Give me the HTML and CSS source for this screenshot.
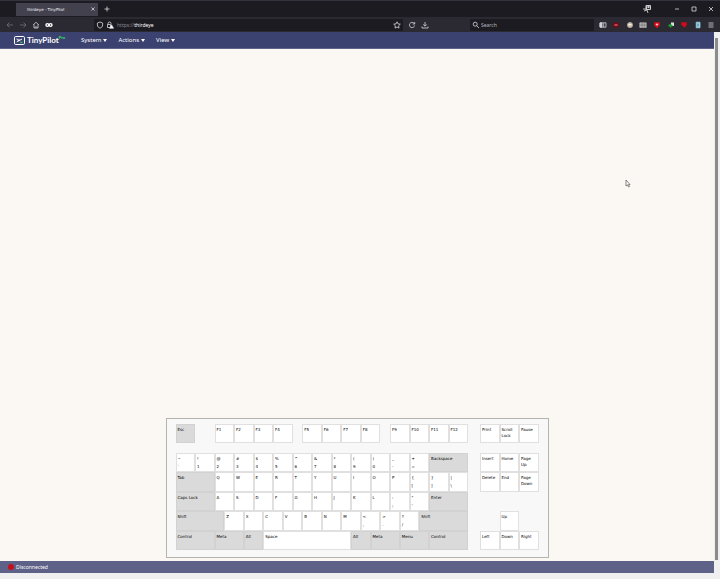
FILE: index.html
```
<!DOCTYPE html>
<html lang="en">
<head>
<meta charset="UTF-8">
<meta name="viewport" content="width=device-width, initial-scale=1.0">
<title>thirdeye - TinyPilot</title>
<link rel="stylesheet" href="styles.css">
</head>
<body>

<!-- Browser window -->
<div class="tab-strip">
  <div class="tab">
    <span>thirdeye - TinyPilot</span>
    <button class="tab-close" aria-label="Close tab"><svg viewBox="0 0 8 8"><path d="M2.500 2.500l3 3M5.500 2.500l-3 3"/></svg></button>
  </div>
  <button class="icon new-tab" aria-label="New tab"><svg viewBox="0 0 8 8"><path d="M4 1.500v5M1.500 4h5"/></svg></button>
  <div class="window-controls">
    <svg class="mask" viewBox="0 0 10 10"><path d="M1 5h3M2 7l3-1M5 6l1 3" stroke="#bbb" fill="none"/><rect x="3.500" y="1" width="5.500" height="5" rx="1" fill="#ccc"/><path d="M5 3h1M7 3h1M5 4.500h3" stroke="#333"/></svg>
    <button class="icon" aria-label="Minimize"><svg viewBox="0 0 8 8"><path d="M2 4h4"/></svg></button>
    <button class="icon" aria-label="Maximize"><svg viewBox="0 0 8 8"><path d="M2 2h4v4h-4z"/></svg></button>
    <button class="icon" aria-label="Close"><svg viewBox="0 0 8 8"><path d="M2 2l4 4M6 2l-4 4"/></svg></button>
  </div>
</div>

<div class="toolbar">
  <div class="toolbar-nav">
    <button class="icon dim" aria-label="Back"><svg viewBox="0 0 8 8"><path d="M7 4H1M3.500 1.500L1 4l2.500 2.500"/></svg></button>
    <button class="icon dim" aria-label="Forward"><svg viewBox="0 0 8 8"><path d="M1 4h6M4.500 1.500L7 4 4.500 6.500"/></svg></button>
    <button class="icon" aria-label="Home"><svg viewBox="0 0 8 8"><path d="M1.200 4L4 1.200 6.800 4M2 3.500V7h4V3.500M4 7V5"/></svg></button>
    <button class="icon" aria-label="Containers"><svg viewBox="0 0 8 8"><g stroke="#fff" stroke-width="1.400"><circle cx="2.400" cy="4" r="1.400"/><circle cx="5.600" cy="4" r="1.400"/></g></svg></button>
  </div>
  <div class="url-bar">
    <svg class="glyph" viewBox="0 0 8 8"><path d="M4 1l2.600 1v2C6.600 5.500 5.500 6.700 4 7.200 2.500 6.700 1.400 5.500 1.400 4V2z"/></svg>
    <svg class="glyph" viewBox="0 0 8 8"><path d="M2 3.500V2.500a1.500 1.500 0 0 1 3 0v1M1.500 3.500h3V6.500h-3z"/><path d="M5.500 3.800L7.500 7.200h-4z" fill="#fff"/></svg>
    <label for="url">https://</label>
    <input id="url" type="text" value="thirdeye">
    <button class="icon" aria-label="Bookmark"><svg viewBox="0 0 8 8"><path d="M4 .8l1 2.100 2.300.300-1.700 1.600.4 2.300L4 6l-2 1.100.4-2.300L.7 3.200 3 2.900z"/></svg></button>
  </div>
  <div class="toolbar-mid">
    <button class="icon" aria-label="Reload"><svg viewBox="0 0 8 8"><path d="M6.600 4.500A2.600 2.600 0 1 1 5.900 2.200M6.700 1v2H4.700"/></svg></button>
    <button class="icon" aria-label="Downloads"><svg viewBox="0 0 8 8"><path d="M4 1v4M2.200 3.400L4 5.200l1.800-1.800M1 5.500v1.500h6V5.500"/></svg></button>
  </div>
  <div class="search-bar">
    <svg class="glyph" viewBox="0 0 8 8"><circle cx="3.200" cy="3.200" r="2"/><path d="M4.700 4.700L7 7"/></svg>
    <input type="search" aria-label="Search" placeholder="Search">
  </div>
  <div class="extensions">
    <button class="icon" aria-label="Sidebar"><svg viewBox="0 0 8 8"><path d="M1 1.800h6v4.400H1z"/><path d="M1 2h2v4H1z" fill="#ccc"/><path d="M4.700 2v4"/></svg></button>
    <button class="icon" aria-label="Blocker"><svg viewBox="0 0 8 8"><ellipse cx="4" cy="4" rx="3" ry="2.200" fill="#8d0a16" stroke="#6b0811"/><path d="M2.500 4h3" stroke="#eaa"/></svg></button>
    <button class="icon" aria-label="Cookies"><svg viewBox="0 0 8 8"><circle cx="4" cy="4" r="2.600" fill="#d8c3a5" stroke="#aaa"/><path d="M2.500 3.500h3" stroke="#fff"/></svg></button>
    <button class="icon" aria-label="Grid"><svg viewBox="0 0 8 8"><path d="M.8 1.800h6.400v4.700H.8z" fill="#bbb" stroke="#aaa"/><path d="M.8 4.100h6.400M3 1.800v4.700M5.200 1.800v4.700" stroke="#555" stroke-width=".5"/></svg></button>
    <button class="icon" aria-label="Shield"><svg viewBox="0 0 8 8"><path d="M1.500 1.500h5v3L4 6.800 1.500 4.500z" fill="#e0101c" stroke="#c00d18"/><circle cx="4" cy="3.500" r=".7" fill="#fff"/></svg></button>
    <button class="icon" aria-label="Translate"><svg viewBox="0 0 8 8"><path d="M4 1.500h3V5H4z" fill="#d8e0d8" stroke="none"/><path d="M1.200 4.500l2-1.500L5.500 5 3.500 6.500z" fill="#21a038" stroke="#187d2b"/></svg></button>
    <button class="icon" aria-label="Alerts"><svg viewBox="0 0 8 8"><path d="M4.500 6.500L1.300 3.500 1.500 1.500h5V4z" fill="#d20d1b" stroke="#b00b16"/></svg></button>
    <button class="icon" aria-label="Notes"><svg viewBox="0 0 8 8"><path d="M2.200 1.200h3.800v5.600H2.200z" fill="#a8dbe8" stroke="#8ccbdc"/><path d="M4 2.500v3" stroke="#256"/></svg></button>
    <button class="icon" aria-label="Menu"><svg viewBox="0 0 8 8"><path d="M1.500 2h5M1.500 4h5M1.500 6h5"/></svg></button>
  </div>
</div>

<!-- TinyPilot page -->
<div class="viewport">
  <div class="page">
    <nav class="navbar">
      <a class="logo" href="#">
        <svg viewBox="0 0 22 18"><rect x="1" y="1" width="20" height="16" rx="2.500" fill="none" stroke="#fff" stroke-width="2"/><path d="M5 6l4 3-3.500 3M8 10.500l8-4.500M11 8L8.500 5.500" fill="none" stroke="#fff" stroke-width="2"/><path d="M12 12.500h5" stroke="#2fd65a" stroke-width="2"/></svg>
        <span>TinyPilot</span><sup>Pro</sup>
      </a>
      <button class="menu">System</button>
      <button class="menu">Actions</button>
      <button class="menu">View</button>
    </nav>

    <main class="screen">
      <div class="keyboard">
        <div class="keys function-row">
          <button class="key mod">Esc</button>
          <button class="key f1">F1</button>
          <button class="key">F2</button>
          <button class="key">F3</button>
          <button class="key">F4</button>
          <button class="key f5">F5</button>
          <button class="key">F6</button>
          <button class="key">F7</button>
          <button class="key">F8</button>
          <button class="key f9">F9</button>
          <button class="key">F10</button>
          <button class="key">F11</button>
          <button class="key">F12</button>
        </div>
        <div class="nav-keys function-row">
          <button class="key">Print</button>
          <button class="key"><span>Scroll</span><span>Lock</span></button>
          <button class="key">Pause</button>
        </div>

        <div class="keys main-rows">
          <button class="key dual"><span>~</span><span>`</span></button>
          <button class="key dual"><span>!</span><span>1</span></button>
          <button class="key dual"><span>@</span><span>2</span></button>
          <button class="key dual"><span>#</span><span>3</span></button>
          <button class="key dual"><span>$</span><span>4</span></button>
          <button class="key dual"><span>%</span><span>5</span></button>
          <button class="key dual"><span>^</span><span>6</span></button>
          <button class="key dual"><span>&amp;</span><span>7</span></button>
          <button class="key dual"><span>*</span><span>8</span></button>
          <button class="key dual"><span>(</span><span>9</span></button>
          <button class="key dual"><span>)</span><span>0</span></button>
          <button class="key dual"><span>_</span><span>-</span></button>
          <button class="key dual"><span>+</span><span>=</span></button>
          <button class="key mod w4">Backspace</button>

          <button class="key mod w4">Tab</button>
          <button class="key">Q</button>
          <button class="key">W</button>
          <button class="key">E</button>
          <button class="key">R</button>
          <button class="key">T</button>
          <button class="key">Y</button>
          <button class="key">U</button>
          <button class="key">I</button>
          <button class="key">O</button>
          <button class="key">P</button>
          <button class="key dual"><span>{</span><span>[</span></button>
          <button class="key dual"><span>}</span><span>]</span></button>
          <button class="key dual"><span>|</span><span>\</span></button>

          <button class="key mod w4">Caps Lock</button>
          <button class="key">A</button>
          <button class="key">S</button>
          <button class="key">D</button>
          <button class="key">F</button>
          <button class="key">G</button>
          <button class="key">H</button>
          <button class="key">J</button>
          <button class="key">K</button>
          <button class="key">L</button>
          <button class="key dual"><span>:</span><span>;</span></button>
          <button class="key dual"><span>"</span><span>'</span></button>
          <button class="key mod w4">Enter</button>

          <button class="key mod w5">Shift</button>
          <button class="key">Z</button>
          <button class="key">X</button>
          <button class="key">C</button>
          <button class="key">V</button>
          <button class="key">B</button>
          <button class="key">N</button>
          <button class="key">M</button>
          <button class="key dual"><span>&lt;</span><span>,</span></button>
          <button class="key dual"><span>&gt;</span><span>.</span></button>
          <button class="key dual"><span>?</span><span>/</span></button>
          <button class="key mod w5">Shift</button>

          <button class="key mod w4">Control</button>
          <button class="key mod w3">Meta</button>
          <button class="key mod">Alt</button>
          <button class="key w9">Space</button>
          <button class="key mod">Alt</button>
          <button class="key mod w3">Meta</button>
          <button class="key mod w3">Menu</button>
          <button class="key mod w4">Control</button>
        </div>
        <div class="nav-keys main-rows">
          <button class="key">Insert</button>
          <button class="key">Home</button>
          <button class="key"><span>Page</span><span>Up</span></button>
          <button class="key">Delete</button>
          <button class="key">End</button>
          <button class="key"><span>Page</span><span>Down</span></button>
          <button class="key up">Up</button>
          <button class="key left">Left</button>
          <button class="key down">Down</button>
          <button class="key right">Right</button>
        </div>
      </div>
    </main>

    <footer class="status-bar"><span class="status-dot"></span>Disconnected</footer>
  </div>
  <div class="scrollbar"><div class="thumb"></div></div>
</div>

<svg class="cursor" viewBox="0 0 6 9"><path d="M1 1v6l1.500-1.200 1 2.200 1-.5-1-2H5z" fill="#fff" stroke="#555" stroke-width=".7"/></svg>

</body>
</html>
```
FILE: styles.css
```
* {
  box-sizing: border-box;
}

body {
  margin: 0;
  height: 100vh;
  display: flex;
  flex-direction: column;
  font-family: "Noto Sans", "Open Sans", sans-serif;
  font-size: 5px;
  background: #f0f0f0;
  overflow: hidden;
}

button,
input {
  margin: 0;
  padding: 0;
  border: 0;
  background: none;
  font: inherit;
  color: inherit;
}

svg {
  display: block;
}

/* Browser window */
.tab-strip {
  display: flex;
  align-items: center;
  height: 17px;
  flex-shrink: 0;
  padding-left: 16px;
  background: #1c1b22;
  border-top: 1px solid #34333d;
  color: #fbfbfe;
}

.tab {
  display: flex;
  align-items: center;
  justify-content: space-between;
  width: 82px;
  height: 13px;
  padding: 0 1px 0 11px;
  background: #42414d;
  font-family: "DejaVu Sans", sans-serif;
  font-size: 4px;
}

.tab-close svg,
.icon svg,
.glyph {
  width: 8px;
  height: 8px;
  fill: none;
  stroke: #d8d8de;
  stroke-width: 0.8;
}

.icon {
  display: flex;
  align-items: center;
  justify-content: center;
  width: 13px;
  height: 13px;
}

.new-tab {
  margin-left: 2px;
}

.window-controls {
  display: flex;
  align-items: center;
  gap: 4px;
  margin-left: auto;
  padding-right: 3px;
}

.mask {
  width: 10px;
  height: 10px;
  margin-right: 14px;
}

.toolbar {
  display: flex;
  align-items: center;
  height: 15px;
  flex-shrink: 0;
  background: #2b2a33;
  color: #fbfbfe;
}

.toolbar-nav {
  display: flex;
  width: 94px;
  padding-left: 3px;
}

.dim {
  opacity: 0.4;
}

.url-bar,
.search-bar {
  display: flex;
  align-items: center;
  height: 12px;
  background: #1c1b22;
  border-radius: 1px;
}

.url-bar {
  flex: 1;
  padding-left: 2px;
}

.url-bar .glyph {
  margin-right: 2px;
}

.url-bar label {
  margin-left: 1px;
  color: #85848c;
}

.url-bar input,
.search-bar input {
  flex: 1;
  min-width: 0;
}

.toolbar-mid {
  display: flex;
  width: 67px;
  padding-left: 2px;
}

.search-bar {
  width: 124px;
  padding-left: 2px;
  gap: 1px;
}

.search-bar input::placeholder {
  color: #b5b5bb;
}

.extensions {
  display: flex;
  justify-content: space-between;
  width: 126px;
  padding: 0 2px;
}

.extensions .icon {
  flex: 1;
}

/* Page */
.viewport {
  flex: 1;
  display: flex;
  min-height: 0;
  padding-bottom: 6px;
}

.page {
  flex: 1;
  display: flex;
  flex-direction: column;
  background: #fbf8f3;
}

.scrollbar {
  width: 6px;
  padding: 6px 2px 13px 1px;
  background: #f0f0f0;
}

.thumb {
  height: 100%;
  background: #8c8c8c;
}

.navbar {
  display: flex;
  align-items: center;
  height: 17px;
  padding-left: 14px;
  background: #3c4270;
  border-bottom: 1px solid #60648a;
  color: #fff;
}

.logo {
  display: flex;
  align-items: center;
  width: 67px;
  font-family: Lato, sans-serif;
  font-size: 8px;
  font-weight: bold;
  color: #fff;
  text-decoration: none;
}

.logo svg {
  width: 11px;
  height: 9px;
  margin-right: 2px;
}

.logo sup {
  align-self: flex-start;
  font-size: 4px;
  line-height: 6px;
  color: #2fe65a;
}

.menu {
  display: flex;
  align-items: center;
  gap: 2px;
  margin-right: 11px;
  font-size: 6px;
}

.menu::after {
  content: "";
  border: 2px solid transparent;
  border-top: 3px solid #fff;
  border-bottom: 0;
}

.screen {
  flex: 1;
  display: flex;
  align-items: flex-end;
  justify-content: center;
  padding-bottom: 3px;
}

/* Keyboard */
.keyboard {
  display: grid;
  grid-template-columns: 5fr 1fr;
  gap: 10px 12px;
  width: 53%;
  min-width: 383px;
  padding: 5px 9px 7px;
  background: #f8f8f8;
  border: 1px solid #b4b4ae;
  font-family: "DejaVu Sans", sans-serif;
  font-size: 4px;
}

.keys,
.nav-keys {
  display: grid;
}

.keys {
  grid-template-columns: repeat(30, 1fr);
}

.nav-keys {
  grid-template-columns: repeat(3, 1fr);
}

.function-row {
  grid-template-rows: 19px;
}

.main-rows {
  grid-template-rows: repeat(5, 1fr);
  height: 97px;
}

.key {
  display: flex;
  flex-direction: column;
  align-items: flex-start;
  justify-content: flex-start;
  min-width: 0;
  padding: 2px 0 0 1px;
  border: 1px solid #e0e0e0;
  background: #fff;
  color: #000;
  line-height: 6px;
  white-space: nowrap;
}

.keys .key {
  grid-column-end: span 2;
}

.key.dual {
  padding-top: 1px;
  line-height: 8px;
}

.key.mod {
  background: #dadada;
  border-color: #d2d2d2;
}

.keys .w3 {
  grid-column-end: span 3;
}

.keys .w4 {
  grid-column-end: span 4;
}

.keys .w5 {
  grid-column-end: span 5;
}

.keys .w9 {
  grid-column-end: span 9;
}

.f1 {
  grid-column-start: 5;
}

.f5 {
  grid-column-start: 14;
}

.f9 {
  grid-column-start: 23;
}

.up {
  grid-area: 4 / 2;
}

.left {
  grid-area: 5 / 1;
}

.down {
  grid-area: 5 / 2;
}

.right {
  grid-area: 5 / 3;
}

/* Status bar */
.status-bar {
  display: flex;
  align-items: center;
  gap: 2px;
  height: 12px;
  padding-left: 8px;
  background: #5f6288;
  color: #fff;
}

.status-dot {
  width: 6px;
  height: 6px;
  border-radius: 50%;
  background: #c4101c;
}

.cursor {
  position: absolute;
  left: 625px;
  top: 179px;
  width: 6px;
  height: 9px;
}
```
